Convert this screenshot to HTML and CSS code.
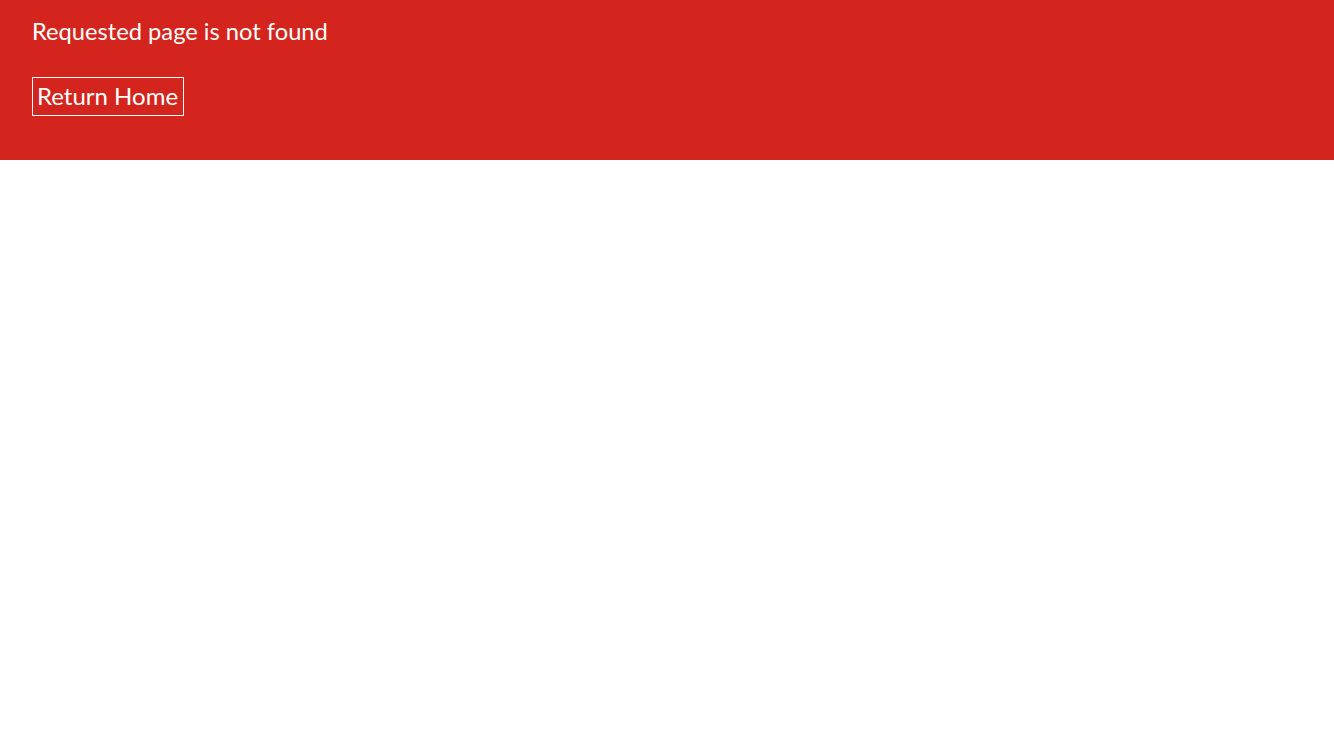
FILE: index.html
```html
<!DOCTYPE html>
<html lang="en">
<head>
<meta charset="utf-8">
<title>Not Found</title>
<link rel="stylesheet" href="styles.css">
</head>
<body>
<header class="banner">
  <h1 class="banner-title">Requested page is not found</h1>
  <a class="home-link" href="#">Return Home</a>
</header>
</body>
</html>
```
FILE: styles.css
```css
html, body {
  margin: 0;
  padding: 0;
  background: #ffffff;
}
body {
  font-family: Lato, "Liberation Sans", sans-serif;
}
.banner {
  background: #d3251d;
  color: #ffffff;
  height: 160px;
  box-sizing: border-box;
  padding: 17px 32px 0;
  display: flex;
  flex-direction: column;
  align-items: flex-start;
}
.banner-title {
  margin: 0 0 31px;
  font-size: 23.7px;
  font-weight: 400;
  line-height: 28.8px;
}
.home-link {
  color: #ffffff;
  text-decoration: none;
  font-size: 24px;
  line-height: 1.2;
  padding: 4px 4px 4px 4px;
  min-width: 142px;
  border: 1px solid #ffffff;
}
```
